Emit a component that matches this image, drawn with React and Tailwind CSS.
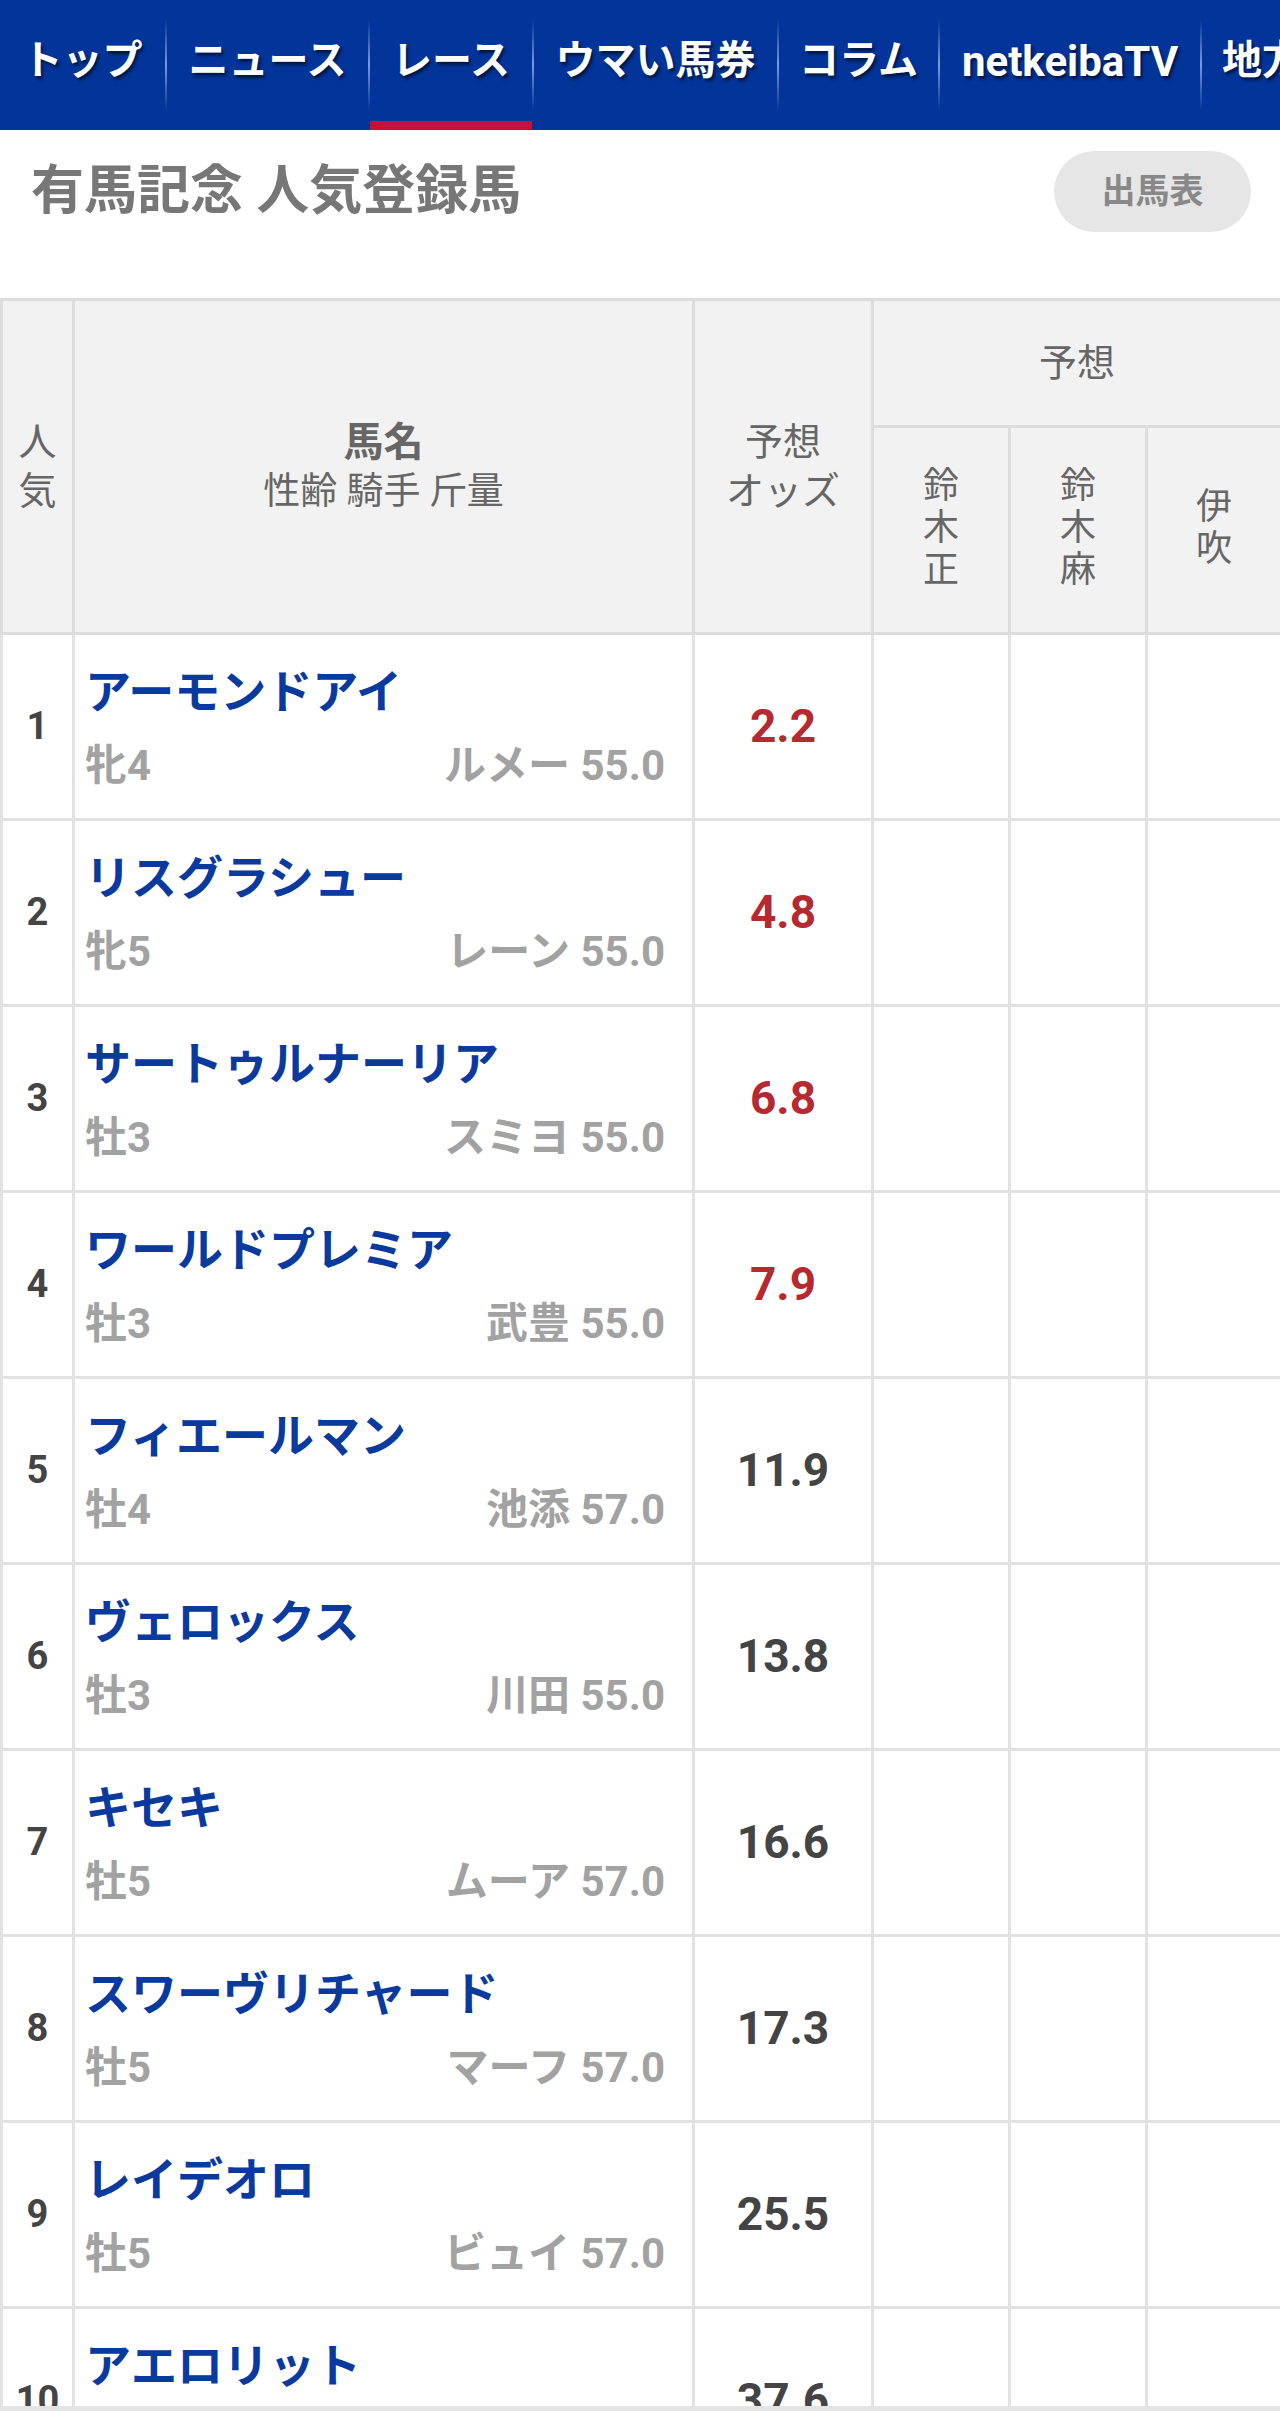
const navItems = [
  { label: "トップ", w: "w-[165px]" },
  { label: "ニュース", w: "w-[201px]" },
  { label: "レース", w: "w-[162px]", active: true },
  { label: "ウマい馬券", w: "w-[243px]" },
  { label: "コラム", w: "w-[159px]" },
  { label: "netkeibaTV", w: "w-[260px]", latin: true },
  { label: "地方競馬", w: "w-[200px]" },
  { label: "POG", w: "w-[140px]" },
];

const horses = [
  { no: 1, name: "アーモンドアイ", sex: "牝4", jockey: "ルメー", weight: "55.0", odds: "2.2", hot: true },
  { no: 2, name: "リスグラシュー", sex: "牝5", jockey: "レーン", weight: "55.0", odds: "4.8", hot: true },
  { no: 3, name: "サートゥルナーリア", sex: "牡3", jockey: "スミヨ", weight: "55.0", odds: "6.8", hot: true },
  { no: 4, name: "ワールドプレミア", sex: "牡3", jockey: "武豊", weight: "55.0", odds: "7.9", hot: true },
  { no: 5, name: "フィエールマン", sex: "牡4", jockey: "池添", weight: "57.0", odds: "11.9" },
  { no: 6, name: "ヴェロックス", sex: "牡3", jockey: "川田", weight: "55.0", odds: "13.8" },
  { no: 7, name: "キセキ", sex: "牡5", jockey: "ムーア", weight: "57.0", odds: "16.6" },
  { no: 8, name: "スワーヴリチャード", sex: "牡5", jockey: "マーフ", weight: "57.0", odds: "17.3" },
  { no: 9, name: "レイデオロ", sex: "牡5", jockey: "ビュイ", weight: "57.0", odds: "25.5" },
  { no: 10, name: "アエロリット", sex: "牝5", jockey: "津村", weight: "55.0", odds: "37.6" },
];

const Stack = ({ chars, className }) => (
  <div className={`flex flex-col items-center ${className}`}>
    {chars.split("").map((c, i) => (
      <span key={i}>{c}</span>
    ))}
  </div>
);

const App = () => {
  return (
    <div className="h-[2411px] w-[1280px] overflow-hidden flex flex-col bg-white font-['Roboto','Noto_Sans_CJK_JP',sans-serif]">

      {/* Global nav */}
      <nav className="flex h-[130px] shrink-0 bg-[#023499] overflow-hidden whitespace-nowrap">
        {navItems.map((item, i) => (
          <div key={item.label} className="flex h-full shrink-0">
            {i > 0 && (
              <span className="self-center h-[92px] w-[2px] bg-gradient-to-b from-transparent via-[#7f9ad6] to-transparent" />
            )}
            <a
              className={`flex items-center justify-center h-full pb-[8px] ${item.w} ${item.latin ? "text-[42px]" : "text-[40px]"} font-bold text-white [text-shadow:2px_3px_3px_rgba(0,0,0,0.55)] ${
                item.active ? "shadow-[inset_0_-9px_0_#c8103a]" : ""
              }`}
            >
              {item.label}
            </a>
          </div>
        ))}
      </nav>

      {/* Title */}
      <div className="shrink-0 flex items-center justify-between pl-[31px] pr-[29px] pt-[21px] h-[102px] mb-[66px]">
        <h1 className="text-[53px] font-bold text-[#777]">有馬記念 人気登録馬</h1>
        <button className="w-[197px] h-[81px] rounded-full bg-[#e6e6e6] text-[34px] font-bold text-[#888]">出馬表</button>
      </div>

      {/* Table */}
      <div className="flex-1 min-h-0 overflow-hidden">
        <table className="w-[1280px] table-fixed border-collapse">
          <colgroup>
            <col className="w-[72px]" />
            <col className="w-[620px]" />
            <col className="w-[179px]" />
            <col className="w-[137px]" />
            <col className="w-[137px]" />
            <col className="w-[135px]" />
          </colgroup>
          <thead>
            <tr className="h-[127px] bg-[#f2f2f2] text-[#666] font-normal">
              <th rowSpan={2} className="border-[3px] border-[#dcdcdc] font-normal">
                <Stack chars="人気" className="text-[38px] leading-[49px]" />
              </th>
              <th rowSpan={2} className="border-[3px] border-[#dcdcdc] font-normal">
                <div className="text-[40px] leading-[49px] font-bold">馬名</div>
                <div className="text-[37px] leading-[49px]">性齢 騎手 斤量</div>
              </th>
              <th rowSpan={2} className="border-[3px] border-[#dcdcdc] font-normal text-[38px] leading-[49px]">
                <div>予想</div>
                <div>オッズ</div>
              </th>
              <th colSpan={3} className="border-[3px] border-[#dcdcdc] font-normal text-[38px]">予想</th>
            </tr>
            <tr className="h-[207px] bg-[#f2f2f2] text-[#666]">
              {["鈴木正", "鈴木麻", "伊吹"].map((n) => (
                <th key={n} className="border-[3px] border-[#dcdcdc] font-normal">
                  <Stack chars={n} className="text-[36px] leading-[42px] -mt-[4px]" />
                </th>
              ))}
            </tr>
          </thead>
          <tbody>
            {horses.map((h) => (
              <tr key={h.no} className="h-[186px]">
                <td className="border-[3px] border-[#e2e2e2] text-center text-[38px] font-bold text-[#444]">{h.no}</td>
                <td className="border-[3px] border-[#e2e2e2] pl-[10px] pr-[27px] pt-[4px]">
                  <div className="text-[46px] leading-[56px] font-bold text-[#0b3a9e]">{h.name}</div>
                  <div className="mt-[18px] flex justify-between text-[42px] leading-[56px] font-bold text-[#a2a2a2]">
                    <span>{h.sex}</span>
                    <span>{h.jockey} {h.weight}</span>
                  </div>
                </td>
                <td className={`border-[3px] border-[#e2e2e2] text-center text-[46px] font-bold ${h.hot ? "text-[#b5292f]" : "text-[#444]"}`}>
                  {h.odds}
                </td>
                <td className="border-[3px] border-[#e2e2e2]" />
                <td className="border-[3px] border-[#e2e2e2]" />
                <td className="border-[3px] border-[#e2e2e2]" />
              </tr>
            ))}
          </tbody>
        </table>
      </div>
      <div className="h-[5px] shrink-0 bg-[#e4e4e4]" />
    </div>
  );
};

export default App;
